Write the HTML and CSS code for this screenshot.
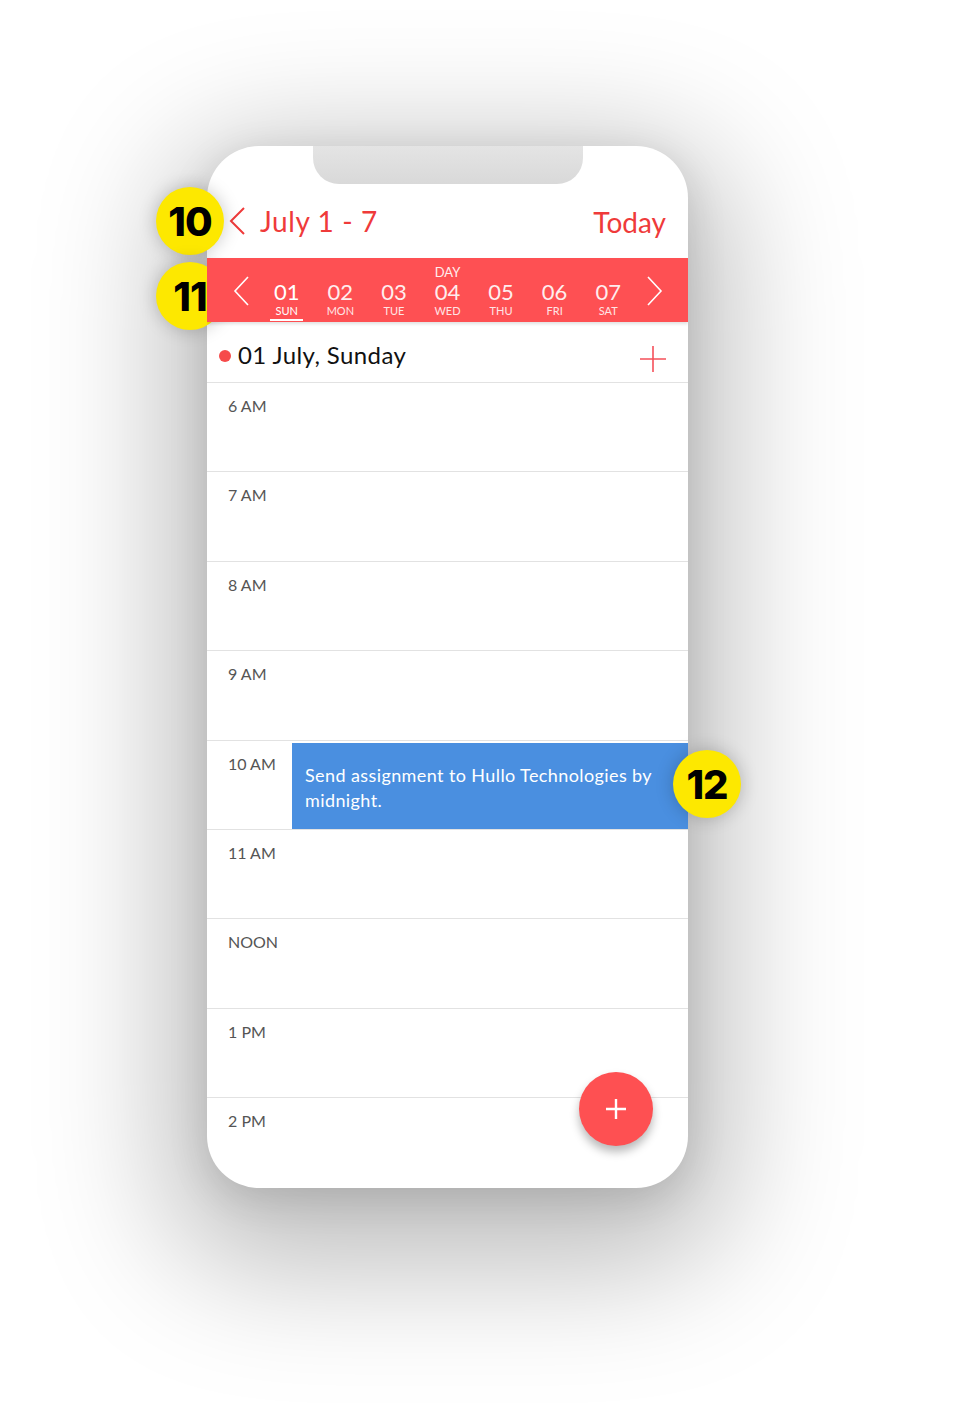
FILE: index.html
```html
<!DOCTYPE html>
<html>
<head>
<meta charset="utf-8">
<link rel="stylesheet" href="styles.css">
</head>
<body>
<div class="page">
  <div class="phone">
    <header class="topbar">
      <div class="range">
        <svg class="chev" width="18" height="28" viewBox="0 0 18 28"><polyline points="16,1 3,14 16,27" fill="none" stroke="#ef3a3a" stroke-width="2"/></svg>
        <span>July 1 - 7</span>
      </div>
      <span class="today">Today</span>
    </header>
    <nav class="week">
      <div class="wchev"><svg width="18" height="30" viewBox="0 0 18 30"><polyline points="16,1 3,15 16,29" fill="none" stroke="#fff" stroke-width="1.6"/></svg></div>
      <div class="day active"><span class="lbl"></span><span class="num">01</span><span class="dn">SUN</span></div>
      <div class="day"><span class="lbl"></span><span class="num">02</span><span class="dn">MON</span></div>
      <div class="day"><span class="lbl"></span><span class="num">03</span><span class="dn">TUE</span></div>
      <div class="day"><span class="lbl">DAY</span><span class="num">04</span><span class="dn">WED</span></div>
      <div class="day"><span class="lbl"></span><span class="num">05</span><span class="dn">THU</span></div>
      <div class="day"><span class="lbl"></span><span class="num">06</span><span class="dn">FRI</span></div>
      <div class="day"><span class="lbl"></span><span class="num">07</span><span class="dn">SAT</span></div>
      <div class="wchev"><svg width="18" height="30" viewBox="0 0 18 30"><polyline points="2,1 15,15 2,29" fill="none" stroke="#fff" stroke-width="1.6"/></svg></div>
    </nav>
    <div class="dateline">
      <span class="dot"></span>
      <span class="datetext">01 July, Sunday</span>
      <svg class="addsmall" width="28" height="28" viewBox="0 0 28 28"><path d="M14 1V27M1 14H27" stroke="#f5505a" stroke-width="1.6"/></svg>
    </div>
    <div class="hours">
      <div class="hour"><span class="hl">6 AM</span></div>
      <div class="hour"><span class="hl">7 AM</span></div>
      <div class="hour"><span class="hl">8 AM</span></div>
      <div class="hour"><span class="hl">9 AM</span></div>
      <div class="hour"><span class="hl">10 AM</span><div class="event">Send assignment to Hullo Technologies by midnight.</div></div>
      <div class="hour"><span class="hl">11 AM</span></div>
      <div class="hour"><span class="hl">NOON</span></div>
      <div class="hour"><span class="hl">1 PM</span></div>
      <div class="hour last"><span class="hl">2 PM</span></div>
    </div>
    <div class="notch"></div>
    <button class="fab"><svg width="22" height="22" viewBox="0 0 22 22"><path d="M11 1V21M1 11H21" stroke="#fff" stroke-width="2.4"/></svg></button>
  </div>
  <div class="badge b10">10</div>
  <div class="badge b11">11</div>
  <div class="badge b12">12</div>
</div>
</body>
</html>
```
FILE: styles.css
```css
html, body {
  margin: 0;
  padding: 0;
  background: #ffffff;
}
.page {
  position: relative;
  width: 966px;
  height: 1403px;
  overflow: hidden;
  padding-top: 146px;
  box-sizing: border-box;
  font-family: Lato, "Open Sans", sans-serif;
}
.phone {
  position: relative;
  margin-left: 207px;
  width: 481px;
  height: 1042px;
  background: #fff;
  border-radius: 52px;
  overflow: hidden;
  box-shadow: 0 40px 130px 40px rgba(0,0,0,0.26), 0 10px 40px rgba(0,0,0,0.12);
  display: flex;
  flex-direction: column;
}
.notch {
  position: absolute;
  left: 106px;
  top: 0;
  width: 270px;
  height: 38px;
  background: linear-gradient(180deg, #e4e4e4, #d9d9d9);
  border-radius: 0 0 26px 26px;
}
.topbar {
  margin-top: 38px;
  height: 74px;
  display: flex;
  align-items: center;
  justify-content: space-between;
  padding: 0 22px 0 21px;
  color: #ef3a3a;
  font-size: 28px;
  flex-shrink: 0;
}
.range {
  display: flex;
  align-items: center;
  gap: 14px;
}
.range span {
  letter-spacing: 0.6px;
}
.today {
  padding-top: 2px;
}
.week {
  height: 64px;
  flex-shrink: 0;
  background: #fe5053;
  display: grid;
  grid-template-columns: 53px repeat(7, 1fr) 53px;
  color: #fff;
  box-shadow: 0 2px 3px rgba(0,0,0,0.12);
  position: relative;
  z-index: 1;
}
.wchev {
  display: flex;
  align-items: center;
  justify-content: center;
  padding-top: 2px;
}
.wchev:first-child { padding-left: 15px; }
.wchev:last-child { padding-right: 13px; }
.day {
  display: flex;
  flex-direction: column;
  align-items: center;
  position: relative;
}
.lbl {
  height: 13px;
  margin-top: 8px;
  font-size: 13px;
  line-height: 13px;
  opacity: 0.9;
}
.num {
  font-size: 22px;
  line-height: 22px;
  margin-top: 2px;
  font-weight: 400;
  opacity: 0.9;
}
.dn {
  font-size: 11px;
  line-height: 11px;
  margin-top: 2px;
  opacity: 0.85;
}
.day.active .num, .day.active .dn { opacity: 1; }
.day.active::after {
  content: "";
  position: absolute;
  bottom: 1px;
  width: 33px;
  height: 2px;
  background: #fff;
}
.dateline {
  height: 61px;
  flex-shrink: 0;
  display: flex;
  align-items: center;
  padding: 0 21px 0 12px;
  border-bottom: 1px solid #e2e2e2;
  box-sizing: border-box;
}
.dot {
  width: 12px;
  height: 12px;
  border-radius: 50%;
  background: #f64a4a;
  margin-right: 7px;
  margin-top: 8px;
}
.datetext {
  font-size: 24px;
  color: #111;
  padding-top: 4px;
  letter-spacing: 0.4px;
}
.addsmall {
  margin-left: auto;
  margin-top: 14px;
}
.hours {
  display: flex;
  flex-direction: column;
}
.hour {
  height: 88.4px;
  border-bottom: 1px solid #e2e2e2;
  display: flex;
  align-items: flex-start;
  flex-shrink: 0;
}
.hour.last { border-bottom: none; }
.hl {
  width: 64px;
  padding-left: 21px;
  padding-top: 13px;
  font-size: 16px;
  color: #555;
  flex-shrink: 0;
}
.event {
  flex: 1;
  margin-top: 2px;
  height: 86px;
  background: #4a8fe0;
  color: #fff;
  font-size: 18px;
  line-height: 25px;
  letter-spacing: 0.4px;
  padding: 20px 20px 0 13px;
  box-sizing: border-box;
}
.fab {
  position: absolute;
  left: 372px;
  top: 926px;
  width: 74px;
  height: 74px;
  border: none;
  border-radius: 50%;
  background: #fe5052;
  box-shadow: 0 6px 10px rgba(0,0,0,0.28);
  display: flex;
  align-items: center;
  justify-content: center;
  padding: 0;
}
.badge {
  position: absolute;
  width: 68px;
  height: 68px;
  border-radius: 50%;
  background: #fde800;
  color: #000;
  font-family: Inter, "DejaVu Sans", sans-serif;
  font-weight: 800;
  font-size: 40px;
  letter-spacing: -1px;
  display: flex;
  align-items: center;
  justify-content: center;
  box-shadow: 0 0 18px rgba(0,0,0,0.22);
}
.b10 { left: 156px; top: 187px; }
.b11 { left: 156px; top: 262px; }
.b12 { left: 673px; top: 750px; }
```
